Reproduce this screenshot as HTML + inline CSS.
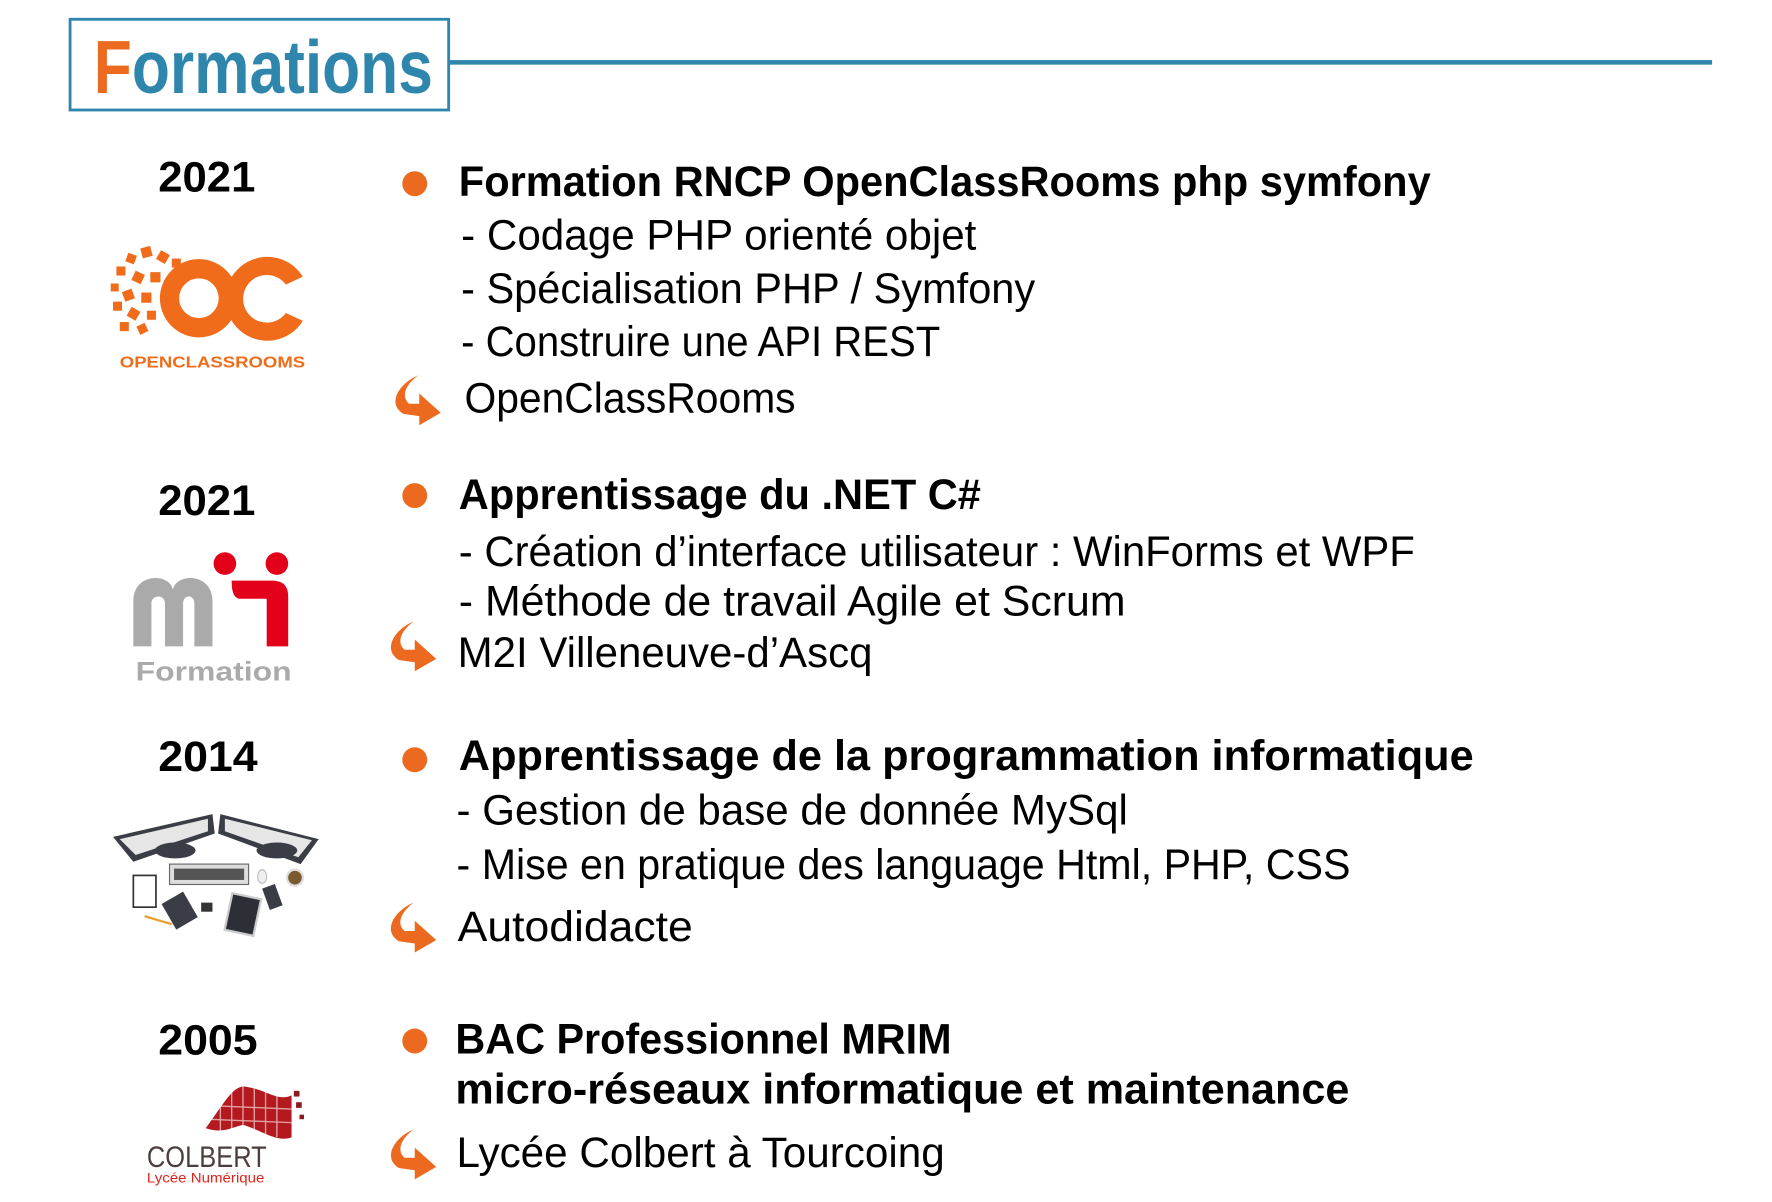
<!DOCTYPE html>
<html><head><meta charset="utf-8"><style>
html,body{margin:0;padding:0;background:#fff;width:1772px;height:1202px;overflow:hidden}
svg{display:block}
text{font-family:"Liberation Sans","DejaVu Sans",sans-serif}
.b{font-weight:bold;fill:#000}
.r{fill:#000}
</style></head><body>
<svg width="1772" height="1202" viewBox="0 0 1568 1060" preserveAspectRatio="none" xmlns="http://www.w3.org/2000/svg">
<defs>
<g id="arr"><path d="M24,0 C7,7 -4,25 11,34 L25,36 L25,44 L44,33 L25,16 L25,25 L16,25 C9,19 12,9 24,0 Z" fill="#ec6a1f"/></g>
</defs>
<rect x="62" y="17" width="335" height="80" fill="#fff" stroke="#2f86ad" stroke-width="2.5"/>
<rect x="397" y="53" width="1118" height="4" fill="#2f86ad"/>
<text x="83" y="82" font-size="66" font-weight="bold" textLength="300" lengthAdjust="spacingAndGlyphs"><tspan fill="#ec6a1f">F</tspan><tspan fill="#2f86ad">ormations</tspan></text>

<text class="b" x="140" y="169" font-size="38" textLength="86" lengthAdjust="spacingAndGlyphs">2021</text>
<text class="b" x="140" y="454" font-size="38" textLength="86" lengthAdjust="spacingAndGlyphs">2021</text>
<text class="b" x="140" y="680" font-size="38" textLength="88" lengthAdjust="spacingAndGlyphs">2014</text>
<text class="b" x="140" y="930" font-size="38" textLength="88" lengthAdjust="spacingAndGlyphs">2005</text>

<circle cx="367" cy="162" r="11" fill="#ec6a1f"/>
<circle cx="367" cy="437" r="11" fill="#ec6a1f"/>
<circle cx="367" cy="670" r="11" fill="#ec6a1f"/>
<circle cx="367" cy="918" r="11" fill="#ec6a1f"/>

<text class="b" x="406" y="173" font-size="38" textLength="860" lengthAdjust="spacingAndGlyphs">Formation RNCP OpenClassRooms php symfony</text>
<text class="r" x="408" y="220" font-size="38" textLength="456" lengthAdjust="spacingAndGlyphs">- Codage PHP orienté objet</text>
<text class="r" x="408" y="267" font-size="38" textLength="508" lengthAdjust="spacingAndGlyphs">- Spécialisation PHP / Symfony</text>
<text class="r" x="408" y="314" font-size="38" textLength="424" lengthAdjust="spacingAndGlyphs">- Construire une API REST</text>
<use href="#arr" x="346" y="331"/>
<text class="r" x="411" y="364" font-size="38" textLength="293" lengthAdjust="spacingAndGlyphs">OpenClassRooms</text>

<text class="b" x="406" y="449" font-size="38" textLength="462" lengthAdjust="spacingAndGlyphs">Apprentissage du .NET C#</text>
<text class="r" x="406" y="499" font-size="38" textLength="846" lengthAdjust="spacingAndGlyphs">- Création d’interface utilisateur : WinForms et WPF</text>
<text class="r" x="406" y="543" font-size="38" textLength="590" lengthAdjust="spacingAndGlyphs">- Méthode de travail Agile et Scrum</text>
<use href="#arr" x="342" y="548"/>
<text class="r" x="405" y="588" font-size="38" textLength="367" lengthAdjust="spacingAndGlyphs">M2I Villeneuve-d’Ascq</text>

<text class="b" x="406" y="679" font-size="38" textLength="898" lengthAdjust="spacingAndGlyphs">Apprentissage de la programmation informatique</text>
<text class="r" x="404" y="727" font-size="38" textLength="594" lengthAdjust="spacingAndGlyphs">- Gestion de base de donnée MySql</text>
<text class="r" x="404" y="775" font-size="38" textLength="791" lengthAdjust="spacingAndGlyphs">- Mise en pratique des language Html, PHP, CSS</text>
<use href="#arr" x="342" y="796"/>
<text class="r" x="405" y="830" font-size="38" textLength="208" lengthAdjust="spacingAndGlyphs">Autodidacte</text>

<text class="b" x="403" y="929" font-size="38" textLength="439" lengthAdjust="spacingAndGlyphs">BAC Professionnel MRIM</text>
<text class="b" x="403" y="973" font-size="38" textLength="791" lengthAdjust="spacingAndGlyphs">micro-réseaux informatique et maintenance</text>
<use href="#arr" x="342" y="996"/>
<text class="r" x="404" y="1029" font-size="38" textLength="432" lengthAdjust="spacingAndGlyphs">Lycée Colbert à Tourcoing</text>

<g fill="#f06b1a">
<circle cx="176" cy="263" r="26" fill="none" stroke="#f06b1a" stroke-width="17"/>
<path d="M268,244 A37,37 0 1 0 268,283 L253,276 A21,21 0 1 1 253,251 Z"/>
<rect x="112" y="224" width="8" height="8" transform="rotate(20 116 228)"/>
<rect x="125" y="218" width="9" height="9" transform="rotate(-15 129 222)"/>
<rect x="140" y="222" width="9" height="9" transform="rotate(30 144 226)"/>
<rect x="152" y="228" width="8" height="8"/>
<rect x="103" y="235" width="8" height="8"/>
<rect x="118" y="240" width="9" height="9" transform="rotate(25 122 244)"/>
<rect x="133" y="240" width="9" height="9"/>
<rect x="98" y="250" width="7" height="7"/>
<rect x="109" y="256" width="9" height="9" transform="rotate(-20 113 260)"/>
<rect x="125" y="258" width="9" height="9"/>
<rect x="100" y="266" width="8" height="8"/>
<rect x="114" y="272" width="9" height="9" transform="rotate(30 118 276)"/>
<rect x="130" y="274" width="8" height="8"/>
<rect x="106" y="284" width="8" height="8"/>
<rect x="122" y="286" width="8" height="8" transform="rotate(-25 126 290)"/>
<text x="106" y="324" font-size="14" font-weight="bold" textLength="164" lengthAdjust="spacingAndGlyphs">OPENCLASSROOMS</text>
</g>

<g>
<path d="M118,570 L118,530 C118,505 150,505 153,520 C156,505 188,505 188,530 L188,570 L172,570 L172,532 C172,524 162,524 162,532 L162,570 L146,570 L146,532 C146,524 134,524 134,532 L134,570 Z" fill="#aaaaab"/>
<text x="191" y="534" font-size="16" font-weight="bold" fill="#fff">2</text>
<circle cx="199" cy="497" r="10" fill="#e2001a"/>
<circle cx="245" cy="497" r="10" fill="#e2001a"/>
<path d="M205,512 L240,512 C250,512 255,516 255,526 L255,570 L236,570 L236,528 L213,528 C207,528 205,522 205,512 Z" fill="#e2001a"/>
<text x="120" y="600" font-size="24" font-weight="bold" fill="#aaaaab" textLength="138" lengthAdjust="spacingAndGlyphs">Formation</text>
</g>

<g>
<path d="M100,738 L188,718 L190,735 L118,760 Z" fill="#3a3d45"/>
<path d="M106,740 L184,722 L184,733 L120,754 Z" fill="#e6e6e6"/>
<path d="M195,718 L282,740 L266,762 L193,735 Z" fill="#3a3d45"/>
<path d="M199,722 L276,741 L264,756 L199,733 Z" fill="#e6e6e6"/>
<ellipse cx="155" cy="750" rx="18" ry="7" fill="#3a3d45"/>
<ellipse cx="245" cy="750" rx="18" ry="7" fill="#3a3d45"/>
<rect x="150" y="762" width="70" height="18" fill="#ddd" stroke="#666"/>
<rect x="154" y="766" width="62" height="10" fill="#555"/>
<rect x="118" y="772" width="20" height="28" fill="#fff" stroke="#333" stroke-width="1.5"/>
<rect x="148" y="790" width="22" height="26" fill="#3a3d45" transform="rotate(-30 159 803)"/>
<rect x="202" y="790" width="26" height="33" fill="#2c2f36" stroke="#ccc" stroke-width="2" transform="rotate(12 215 806)"/>
<rect x="235" y="781" width="12" height="20" fill="#3a3d45" transform="rotate(-20 241 791)"/>
<circle cx="261" cy="774" r="7" fill="#7a5b30" stroke="#ddd" stroke-width="2"/>
<ellipse cx="232" cy="773" rx="4" ry="6" fill="#eee" stroke="#bbb"/>
<line x1="128" y1="808" x2="152" y2="815" stroke="#e8a030" stroke-width="2"/>
<rect x="178" y="796" width="10" height="8" fill="#333"/>
</g>

<g>
<path d="M182,995 C200,970 205,960 215,958 C235,960 245,972 258,966 L258,1003 C245,1008 230,996 215,992 C205,994 198,1000 182,995 Z" fill="#b3191f"/>
<g stroke="#fff" stroke-width="1.2" opacity="0.6">
<line x1="195" y1="960" x2="195" y2="1000"/><line x1="205" y1="958" x2="205" y2="998"/><line x1="215" y1="957" x2="215" y2="995"/><line x1="225" y1="960" x2="225" y2="998"/><line x1="235" y1="963" x2="235" y2="1000"/><line x1="245" y1="967" x2="245" y2="1003"/>
<line x1="185" y1="975" x2="258" y2="978"/><line x1="183" y1="987" x2="258" y2="990"/>
</g>
<rect x="260" y="962" width="5" height="5" fill="#8c1b1f"/><rect x="262" y="972" width="5" height="5" fill="#8c1b1f"/><rect x="265" y="983" width="4" height="4" fill="#8c1b1f"/>
<text x="130" y="1029" font-size="26" fill="#4a3f3c" textLength="106" lengthAdjust="spacingAndGlyphs">COLBERT</text>
<text x="130" y="1043" font-size="12" fill="#e2231a" textLength="104" lengthAdjust="spacingAndGlyphs">Lycée Numérique</text>
</g>
</svg>
</body></html>
